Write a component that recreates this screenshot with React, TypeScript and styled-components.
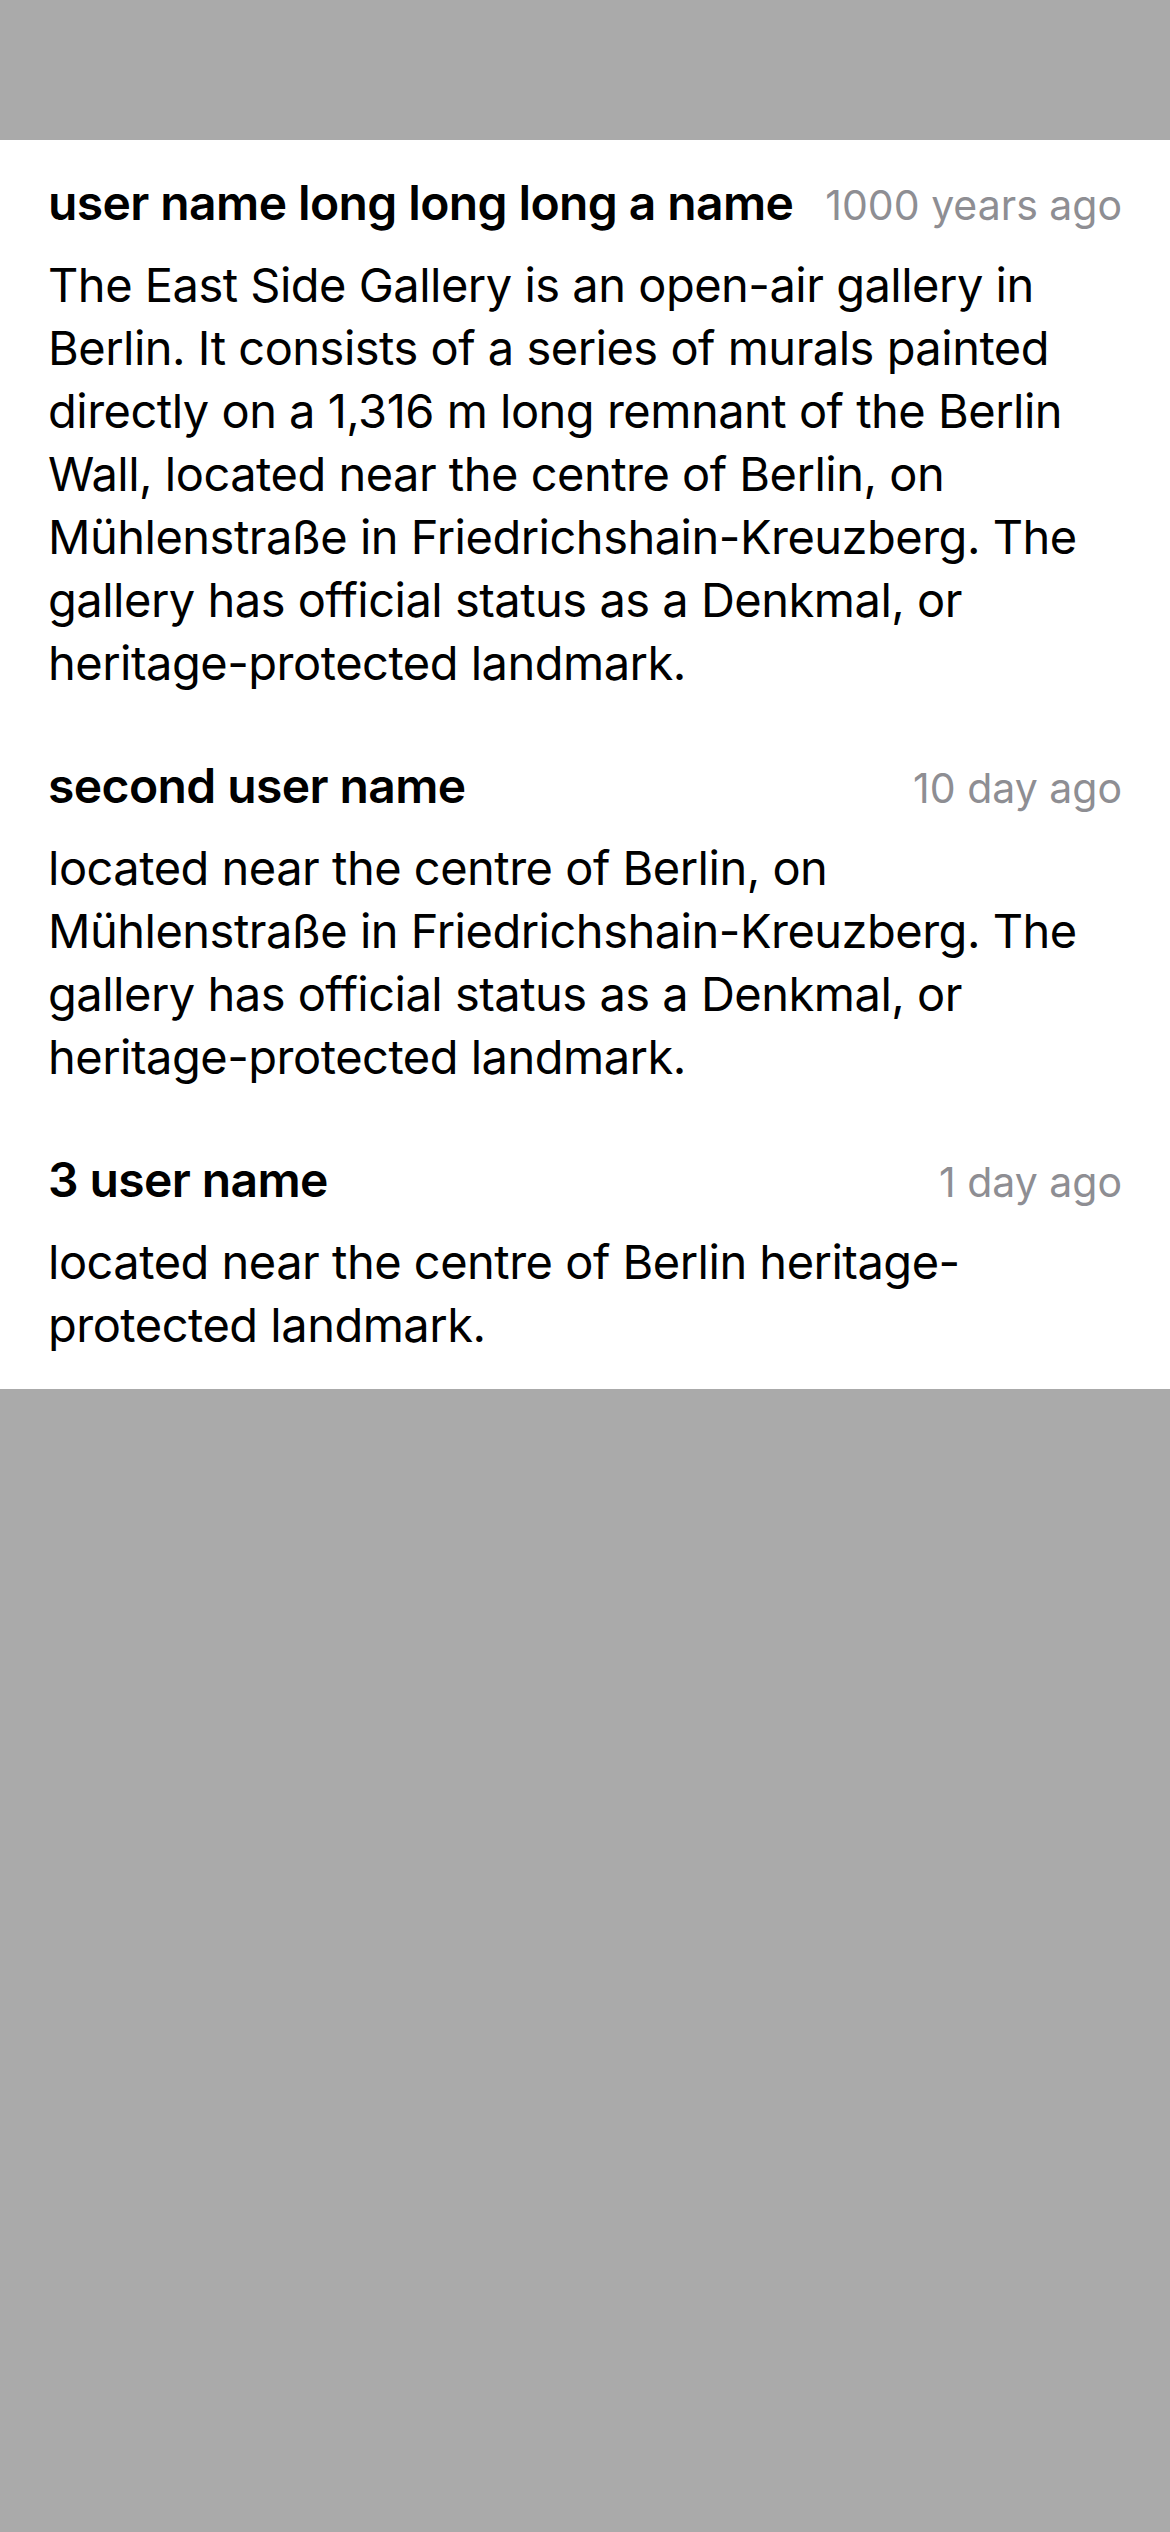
import React from "react";
import styled, { createGlobalStyle } from "styled-components";

const GlobalStyle = createGlobalStyle`
  html, body {
    margin: 0;
    padding: 0;
    background: #aaaaaa;
  }
  body {
    font-family: Inter, "Noto Sans", "Liberation Sans", sans-serif;
    -webkit-font-smoothing: antialiased;
  }
`;

const Screen = styled.div`
  min-height: 2532px;
  background: #aaaaaa;
  padding-top: 140px;
  box-sizing: border-box;
`;

const Panel = styled.section`
  background: #ffffff;
  padding: 33px 48px 33px;
  display: flex;
  flex-direction: column;
  gap: 62px;
`;

const Comment = styled.article`
  display: flex;
  flex-direction: column;
  gap: 20px;
`;

const Header = styled.div`
  display: flex;
  justify-content: space-between;
  align-items: baseline;
  gap: 32px;
  height: 60px;
  line-height: 60px;
`;

const Name = styled.span`
  font-size: 48px;
  font-weight: 600;
  color: #000000;
  letter-spacing: -0.6px;
  white-space: nowrap;
`;

const Time = styled.span`
  font-size: 41px;
  font-weight: 400;
  color: #8e8e93;
  white-space: nowrap;
`;

const Body = styled.p`
  margin: 0;
  font-size: 47px;
  line-height: 63px;
  color: #000000;
  letter-spacing: -0.5px;
`;

const comments = [
  {
    name: "user name long long long a name",
    time: "1000 years ago",
    text:
      "The East Side Gallery is an open-air gallery in Berlin. It consists of a series of murals painted directly on a 1,316 m long remnant of the Berlin Wall, located near the centre of Berlin, on Mühlenstraße in Friedrichshain-Kreuzberg. The gallery has official status as a Denkmal, or heritage-protected landmark.",
  },
  {
    name: "second user name",
    time: "10 day ago",
    text:
      "located near the centre of Berlin, on Mühlenstraße in Friedrichshain-Kreuzberg. The gallery has official status as a Denkmal, or heritage-protected landmark.",
  },
  {
    name: "3 user name",
    time: "1 day ago",
    text: "located near the centre of Berlin heritage-protected landmark.",
  },
];

export default function App() {
  return (
    <>
      <GlobalStyle />
      <Screen>
        <Panel>
          {comments.map((c) => (
            <Comment key={c.name}>
              <Header>
                <Name>{c.name}</Name>
                <Time>{c.time}</Time>
              </Header>
              <Body>{c.text}</Body>
            </Comment>
          ))}
        </Panel>
      </Screen>
    </>
  );
}
